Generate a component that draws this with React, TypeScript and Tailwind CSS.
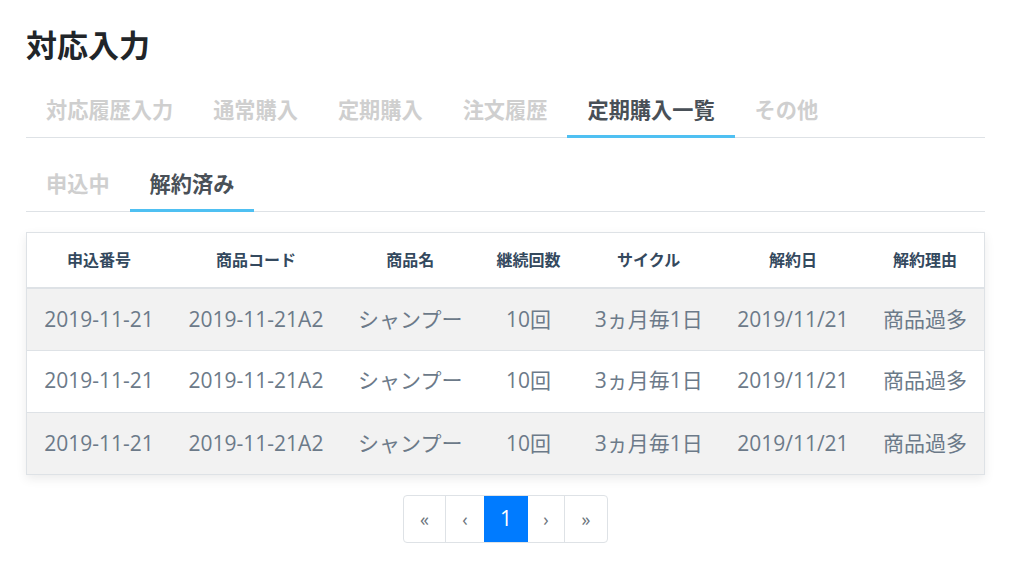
import React from "react";

const mainTabs = ["対応履歴入力", "通常購入", "定期購入", "注文履歴", "定期購入一覧", "その他"];
const subTabs = ["申込中", "解約済み"];
const columns = ["申込番号", "商品コード", "商品名", "継続回数", "サイクル", "解約日", "解約理由"];

type Row = string[];

const rows: Row[] = [
    ["2019-11-21", "2019-11-21A2", "シャンプー", "10回", "3ヵ月毎1日", "2019/11/21", "商品過多"],
    ["2019-11-21", "2019-11-21A2", "シャンプー", "10回", "3ヵ月毎1日", "2019/11/21", "商品過多"],
    ["2019-11-21", "2019-11-21A2", "シャンプー", "10回", "3ヵ月毎1日", "2019/11/21", "商品過多"],
];

function Tabs({ items, active }: { items: string[]; active: number }) {
    return (
        <div className="flex border-b border-[#dee2e6]">
            {items.map((item, index) => (
                <div
                    key={item}
                    className={
                        index === active
                            ? "px-5 pt-3 pb-[9px] text-[21.2px] leading-[30px] font-bold text-[#495057] border-b-[3px] border-[#4fc0f2] -mb-px"
                            : "px-5 pt-3 pb-3 text-[21.2px] leading-[30px] font-bold text-[#cfcfcf]"
                    }
                >
                    {item}
                </div>
            ))}
        </div>
    );
}

export default function App() {
    return (
        <div
            className="px-[26px] pt-[27px] bg-white min-h-screen"
            style={{ fontFamily: '"Open Sans", "Noto Sans CJK JP", sans-serif' }}
        >
            {/* Page title */}
            <h1 className="text-[31px] leading-[36px] font-bold text-[#212529]">対応入力</h1>

            <div className="mt-5">
                <Tabs items={mainTabs} active={4} />
            </div>

            <div className="mt-[19px]">
                <Tabs items={subTabs} active={1} />
            </div>

            {/* Cancelled subscriptions table */}
            <div className="mt-[20px] border border-[#dee2e6] shadow-[0_4px_10px_rgba(0,0,0,0.08)]">
                <table className="w-full border-collapse">
                    <thead>
                        <tr className="border-b-2 border-[#dee2e6]">
                            {columns.map((col) => (
                                <th
                                    key={col}
                                    className="h-[55px] px-[16px] text-center text-[16px] font-bold text-[#34495e] whitespace-nowrap"
                                >
                                    {col}
                                </th>
                            ))}
                        </tr>
                    </thead>
                    <tbody>
                        {rows.map((row, i) => (
                            <tr
                                key={i}
                                className={
                                    (i % 2 === 0 ? "bg-[#f2f2f2]" : "bg-white") +
                                    (i < rows.length - 1 ? " border-b border-[#dee2e6]" : "")
                                }
                            >
                                {row.map((cell, j) => (
                                    <td
                                        key={j}
                                        className="h-[62px] px-[16px] text-center text-[21px] text-[#6c7a89] whitespace-nowrap"
                                    >
                                        {cell}
                                    </td>
                                ))}
                            </tr>
                        ))}
                    </tbody>
                </table>
            </div>

            {/* Pagination */}
            <div className="flex justify-center mt-5">
                <div className="flex border border-[#dee2e6] rounded-[4px] overflow-hidden h-[48px]">
                    <div className="w-[42px] flex items-center justify-center text-[18px] text-[#6c757d] border-r border-[#dee2e6]">«</div>
                    <div className="w-[38px] flex items-center justify-center text-[18px] text-[#6c757d]">‹</div>
                    <div className="w-[44px] flex items-center justify-center text-[21px] text-white bg-[#007bff]">1</div>
                    <div className="w-[37px] flex items-center justify-center text-[18px] text-[#6c757d] border-r border-[#dee2e6]">›</div>
                    <div className="w-[42px] flex items-center justify-center text-[18px] text-[#6c757d]">»</div>
                </div>
            </div>
        </div>
    );
}
